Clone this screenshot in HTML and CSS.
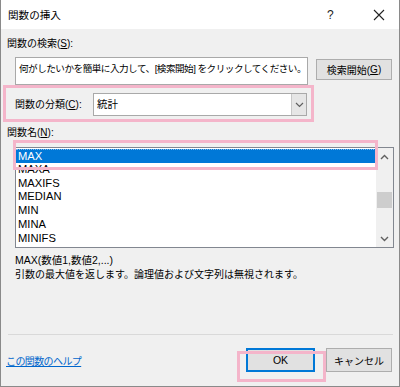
FILE: index.html
```html
<!DOCTYPE html>
<html lang="ja">
<head>
<meta charset="utf-8">
<title>関数の挿入</title>
<link rel="stylesheet" href="styles.css">
</head>
<body>
<div class="dialog">
  <div class="titlebar">
    <span class="title">関数の挿入</span>
    <span class="tb-help">?</span>
    <span class="tb-close">
      <svg width="12" height="12" viewBox="0 0 12 12"><path d="M1 1L11 11M11 1L1 11" stroke="#222" stroke-width="1.1" fill="none"/></svg>
    </span>
  </div>
  <div class="content">
    <div class="label lbl-search">関数の検索(<u>S</u>):</div>
    <div class="search-row">
      <div class="textbox">何がしたいかを簡単に入力して、[検索開始] をクリックしてください。</div>
      <div class="btn btn-search">検索開始(<u>G</u>)</div>
    </div>
    <div class="cat-row">
      <span class="label">関数の分類(<u>C</u>):</span>
      <div class="select">
        <span class="select-val">統計</span>
        <span class="select-btn">
          <svg width="9" height="6" viewBox="0 0 9 6"><path d="M1 1L4.5 4.5L8 1" stroke="#606060" stroke-width="1.2" fill="none"/></svg>
        </span>
      </div>
    </div>
    <div class="label lbl-name">関数名(<u>N</u>):</div>
    <div class="listbox">
      <div class="items">
        <div class="item selected">MAX</div>
        <div class="item">MAXA</div>
        <div class="item">MAXIFS</div>
        <div class="item">MEDIAN</div>
        <div class="item">MIN</div>
        <div class="item">MINA</div>
        <div class="item">MINIFS</div>
      </div>
      <div class="scrollbar">
        <span class="sb-arrow">
          <svg width="9" height="6" viewBox="0 0 9 6"><path d="M1 5L4.5 1.5L8 5" stroke="#606060" stroke-width="1.4" fill="none"/></svg>
        </span>
        <span class="sb-track"><span class="sb-thumb"></span></span>
        <span class="sb-arrow">
          <svg width="9" height="6" viewBox="0 0 9 6"><path d="M1 1L4.5 4.5L8 1" stroke="#606060" stroke-width="1.4" fill="none"/></svg>
        </span>
      </div>
    </div>
    <div class="syntax">MAX(数値1,数値2,...)</div>
    <div class="desc">引数の最大値を返します。論理値および文字列は無視されます。</div>
    <div class="sep"></div>
    <div class="footer">
      <a class="help" href="#">この関数のヘルプ</a>
      <div class="btn btn-ok">OK</div>
      <div class="btn btn-cancel">キャンセル</div>
    </div>
  </div>
  <div class="hl hl-cat"></div>
  <div class="hl hl-max"></div>
  <div class="hl hl-ok"></div>
</div>
</body>
</html>
```
FILE: styles.css
```css
* { box-sizing: border-box; }
html, body { margin: 0; padding: 0; background: #f0f0f0; }
body {
  font-family: "Liberation Sans", "Noto Sans CJK JP", sans-serif;
  font-size: 10px;
  color: #000;
}
u { text-decoration: underline; text-underline-offset: 1px; }
.dialog {
  position: relative;
  width: 400px;
  height: 387px;
  background: #f0f0f0;
  border-left: 1px solid #8a8a8a;
  border-right: 1px solid #8a8a8a;
  border-bottom: 1px solid #8a8a8a;
}
.titlebar {
  height: 29px;
  background: #fff;
  display: flex;
  align-items: center;
  padding-left: 7px;
}
.title { font-size: 10.6px; flex: 1; }
.tb-help { font-size: 12px; width: 12px; margin-right: 34px; color: #222; }
.tb-close { width: 12px; height: 12px; margin-right: 14px; display: flex; }
.content { padding: 0 6px 0 6px; }
.label { line-height: 14px; }
.lbl-search { margin-top: 8px; height: 14px; }
.search-row {
  display: flex;
  align-items: flex-start;
  margin-top: 6px;
  margin-left: 8px;
}
.textbox {
  flex: none;
  width: 293px;
  height: 28px;
  background: #fff;
  border: 1px solid #a9a9a9;
  padding: 4px 3px 0 3px;
  line-height: 14px;
  white-space: nowrap;
  overflow: hidden;
  font-size: 9.6px;
  letter-spacing: -0.5px;
}
.btn {
  display: flex;
  align-items: center;
  justify-content: center;
  background: #e1e1e1;
  border: 1px solid #adadad;
}
.btn-search {
  flex: none;
  margin-left: 8px;
  margin-top: 2px;
  width: 76px;
  height: 21px;
}
.cat-row {
  display: flex;
  align-items: center;
  margin-top: 8px;
  margin-left: 8px;
  height: 23px;
}
.cat-row .label { width: 78px; }
.select {
  width: 214px;
  height: 23px;
  background: #fff;
  border: 1px solid #a9a9a9;
  display: flex;
}
.select-val { flex: 1; padding-left: 3px; line-height: 21px; font-size: 10.5px; }
.select-btn {
  width: 15px;
  background: #e6e6e6;
  border-left: 1px solid #c8c8c8;
  display: flex;
  align-items: center;
  justify-content: center;
}
.lbl-name { margin-top: 10px; height: 14px; }
.listbox {
  margin-top: 7px;
  margin-left: 8px;
  width: 379px;
  height: 101px;
  background: #fff;
  border: 1px solid #828790;
  display: flex;
}
.items {
  flex: 1;
  padding-top: 1px;
  overflow: hidden;
}
.item {
  height: 13.83px;
  line-height: 13.83px;
  padding-left: 2px;
  font-family: "Liberation Sans", sans-serif;
  font-size: 11.2px;
  color: #000;
}
.item.selected {
  background: #0078d7;
  color: #fff;
  border-top: 1px dotted #7fb8ea;
  line-height: 12.83px;
}
.scrollbar {
  width: 17px;
  background: #f0f0f0;
  display: flex;
  flex-direction: column;
  align-items: center;
}
.sb-arrow {
  height: 17px;
  width: 17px;
  display: flex;
  align-items: center;
  justify-content: center;
}
.sb-track { flex: 1; width: 100%; padding-top: 27px; display: flex; justify-content: center; }
.sb-thumb { width: 15px; height: 16px; background: #cdcdcd; display: block; }
.syntax { margin-top: 5px; margin-left: 8px; line-height: 14px; font-size: 10.5px; }
.desc { margin-top: 1px; margin-left: 8px; line-height: 14px; letter-spacing: 0; }
.sep {
  margin-top: 52px;
  margin-left: 1px;
  height: 1px;
  background: #d9d9d9;
}
.footer {
  display: flex;
  align-items: center;
  margin-top: 13px;
  height: 24px;
}
.help {
  color: #0066cc;
  text-decoration: underline;
  flex: 1;
  margin-left: -1px;
  letter-spacing: -0.6px;
  font-size: 10px;
}
.btn-ok {
  width: 69px;
  height: 24px;
  border: 2px solid #0078d7;
  font-size: 10.5px;
}
.btn-cancel {
  width: 66px;
  height: 24px;
  margin-left: 11px;
  margin-right: 1px;
  font-size: 10px;
}
.hl {
  position: absolute;
  border: 3px solid #f4b5ca;
  pointer-events: none;
}
.hl-cat { left: 2px; top: 85px; width: 311px; height: 37px; }
.hl-max { left: 12px; top: 140px; width: 365px; height: 30px; }
.hl-ok { left: 236px; top: 351px; width: 89px; height: 31px; }
```
